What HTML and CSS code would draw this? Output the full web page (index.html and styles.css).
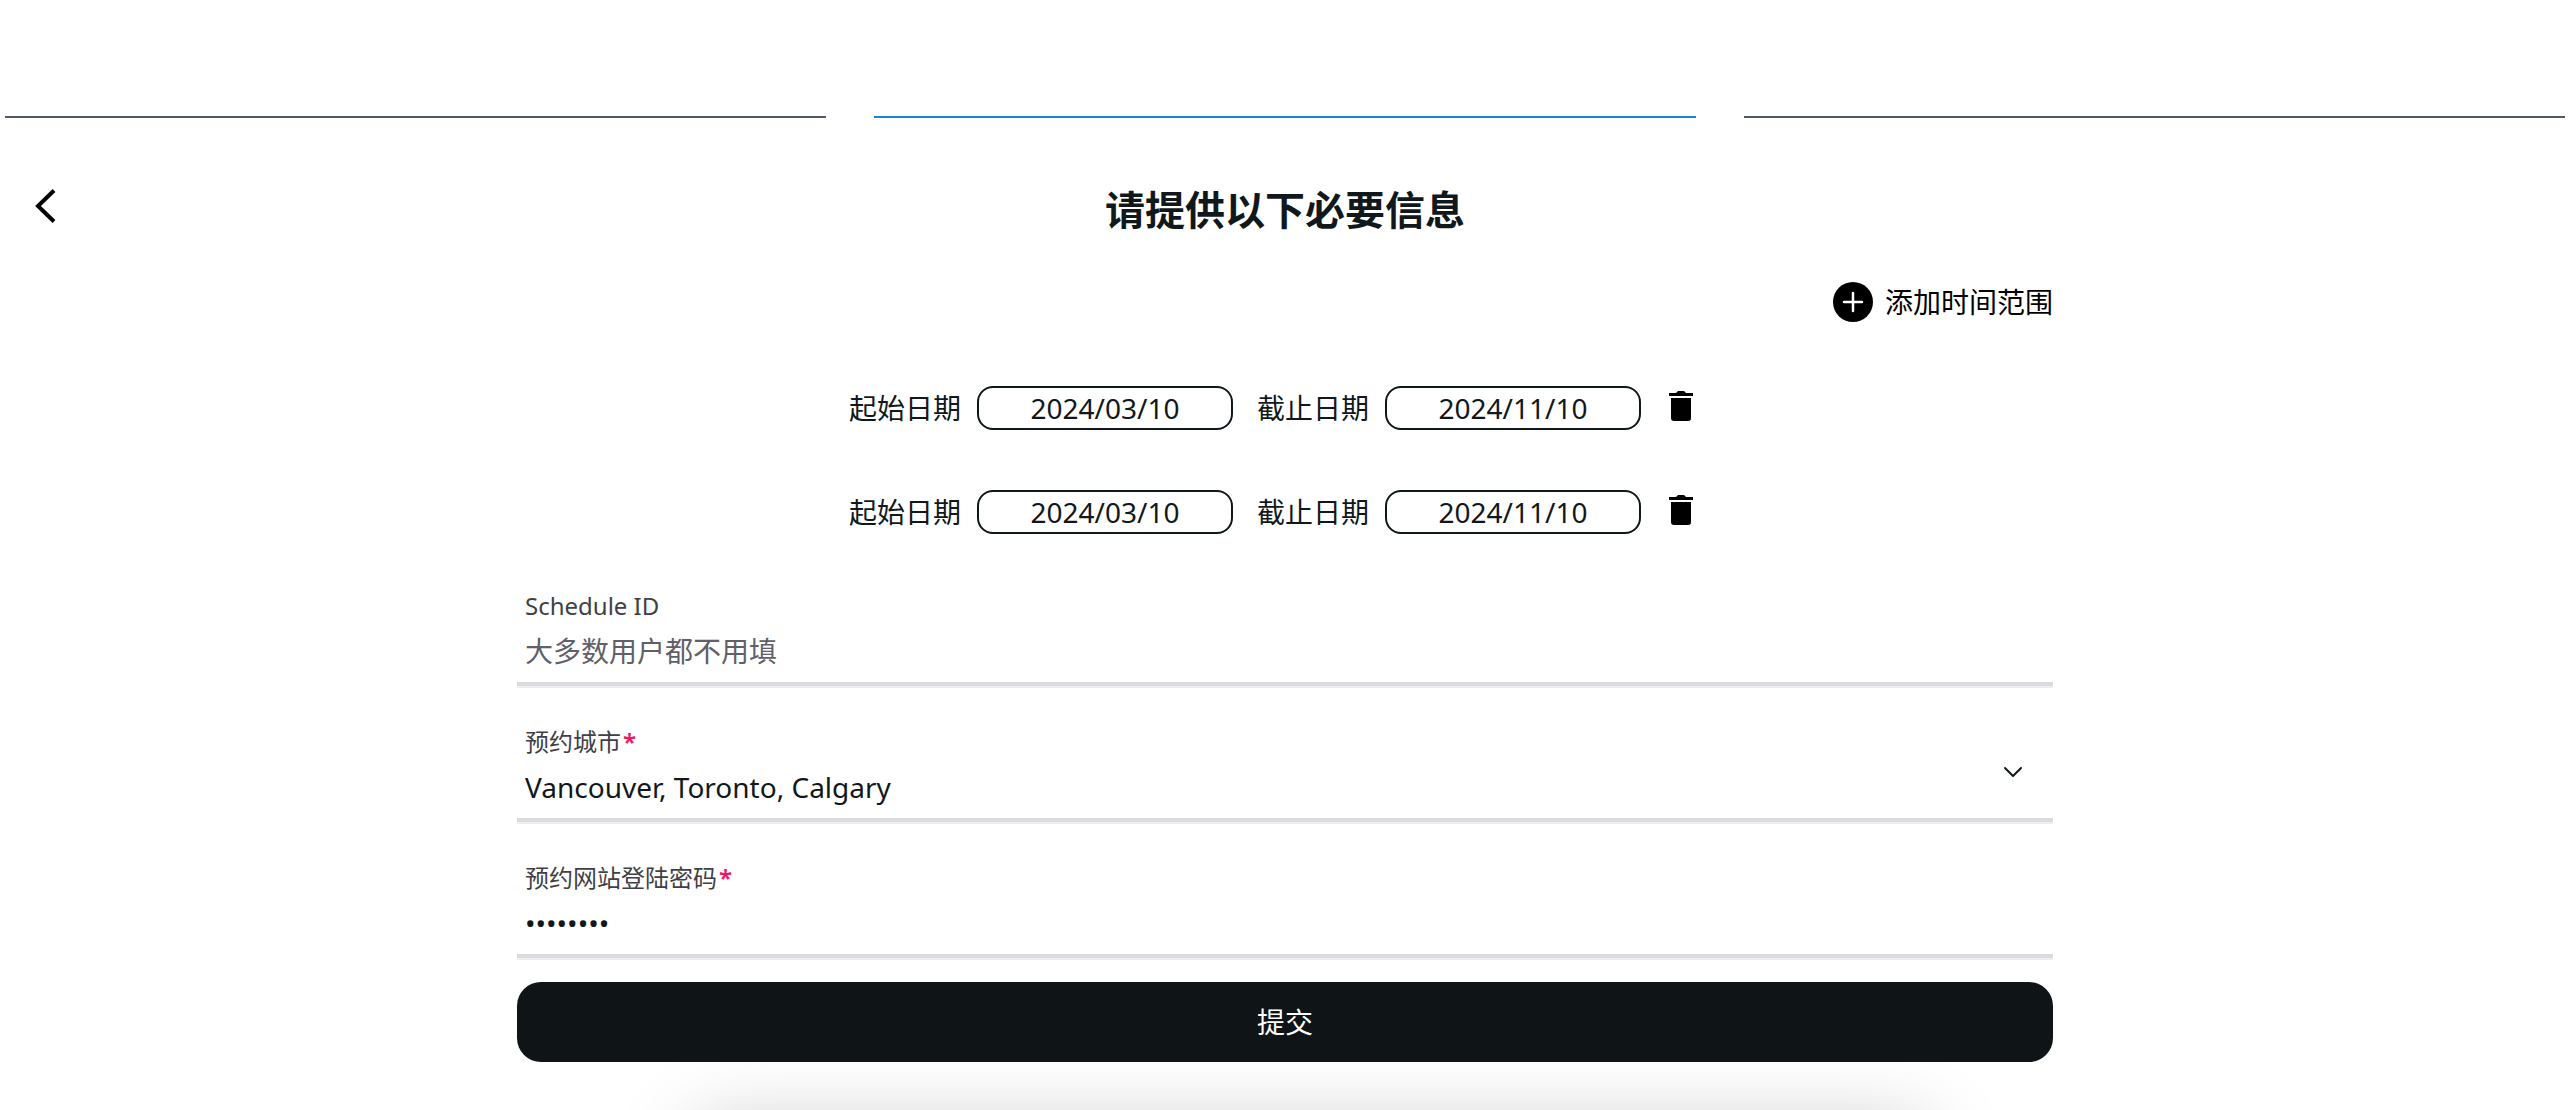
FILE: index.html
```html
<!DOCTYPE html>
<html lang="zh-CN">
<head>
<meta charset="utf-8">
<meta name="viewport" content="width=device-width, initial-scale=1">
<title>请提供以下必要信息</title>
<link rel="stylesheet" href="styles.css">
</head>
<body>
<div class="steps">
  <span class="step"></span>
  <span class="step step-active"></span>
  <span class="step"></span>
</div>
<header class="header">
  <button class="icon-button back" type="button" aria-label="返回">
    <svg width="24" height="40" viewBox="0 0 24 40" fill="none" stroke="#000" stroke-width="4"><path d="M22 4.500 6 20 22 35.500"/></svg>
  </button>
  <h1 class="title">请提供以下必要信息</h1>
</header>
<main class="content">
  <button class="icon-button add" type="button">
    <svg width="48" height="48" viewBox="0 0 48 48"><circle cx="24" cy="24" r="20"/><path d="M24 15v18M15 24h18" stroke="#fff" stroke-width="2.500" stroke-linecap="round"/></svg>
    添加时间范围
  </button>
  <form class="form">
    <div class="ranges">
      <div class="range">
        <label class="range-field">起始日期<input class="date" type="text" value="2024/03/10"></label>
        <label class="range-field">截止日期<input class="date" type="text" value="2024/11/10"></label>
        <button class="icon-button remove" type="button" aria-label="删除">
          <svg width="32" height="36" viewBox="0 0 32 36"><path d="M4 5h7l2-2h6l2 2h7v3H4zM6 10h20v20a3 3 0 0 1-3 3H9a3 3 0 0 1-3-3z"/></svg>
        </button>
      </div>
      <div class="range">
        <label class="range-field">起始日期<input class="date" type="text" value="2024/03/10"></label>
        <label class="range-field">截止日期<input class="date" type="text" value="2024/11/10"></label>
        <button class="icon-button remove" type="button" aria-label="删除">
          <svg width="32" height="36" viewBox="0 0 32 36"><path d="M4 5h7l2-2h6l2 2h7v3H4zM6 10h20v20a3 3 0 0 1-3 3H9a3 3 0 0 1-3-3z"/></svg>
        </button>
      </div>
    </div>
    <div class="fields">
      <div class="field">
        <label class="label" for="schedule">Schedule ID</label>
        <input class="control" id="schedule" type="text" placeholder="大多数用户都不用填">
      </div>
      <div class="field">
        <label class="label required" for="city">预约城市</label>
        <select class="control" id="city"><option>Vancouver, Toronto, Calgary</option></select>
        <svg class="chevron" width="32" height="32" viewBox="0 0 32 32" fill="none" stroke="#11181c" stroke-width="2" stroke-linecap="round" stroke-linejoin="round"><path d="m8 12 8 8 8-8"/></svg>
      </div>
      <div class="field">
        <label class="label required" for="password">预约网站登陆密码</label>
        <input class="control" id="password" type="password" value="password">
      </div>
    </div>
    <button class="submit" type="submit">提交</button>
  </form>
</main>
<div class="glow"></div>
</body>
</html>
```
FILE: styles.css
```css
* {
  box-sizing: border-box;
}

body {
  margin: 0;
  background: #fff;
  color: #11181c;
  font: 28px/40px "Noto Sans", "Noto Sans CJK SC", sans-serif;
}

button,
input,
select {
  font: inherit;
  color: inherit;
}

.steps {
  display: flex;
  gap: 48px;
  padding: 116px 5px 0;
}

.step {
  flex: 1;
  height: 2px;
  background: #52586a;
}

.step-active {
  background: #1488d8;
}

.icon-button {
  display: flex;
  align-items: center;
  padding: 0;
  border: 0;
  background: none;
  color: #000;
}

.header {
  display: grid;
  grid-template-columns: 1fr auto 1fr;
  align-items: start;
  padding: 64px 32px 0;
}

.back {
  width: 24px;
  height: 48px;
}

.title {
  margin: 0;
  font-size: 40px;
  line-height: 56px;
  font-weight: 700;
}

.content {
  width: calc(100% - 64px);
  max-width: 1536px;
  margin: 0 auto;
}

.add {
  gap: 8px;
  margin: 40px 0 0 auto;
}

.form {
  margin-top: 60px;
}

.ranges {
  display: grid;
  gap: 60px;
}

.range {
  display: flex;
  justify-content: center;
  gap: 24px;
}

.range-field {
  display: flex;
  align-items: center;
  gap: 16px;
}

.date {
  width: 256px;
  height: 44px;
  padding: 0;
  border: 2px solid #11181c;
  border-radius: 16px;
  background: none;
  text-align: center;
}

.remove {
  height: 40px;
  margin-right: 24px;
}

.fields {
  display: grid;
  gap: 16px;
  margin-top: 32px;
}

.field {
  position: relative;
  height: 120px;
  padding: 20px 8px 0;
  border-bottom: 4px solid #dcdbe0;
  box-shadow: 0 2px 0 #ededee;
}

.label {
  display: block;
  color: #3f3f46;
  font-size: 24px;
  line-height: 40px;
}

.required::after {
  content: "*";
  margin-left: 2px;
  color: #f31260;
  font-weight: 600;
}

.control {
  display: block;
  width: 100%;
  height: 50px;
  padding: 0;
  border: 0;
  outline: 0;
  appearance: none;
  background: none;
}

.control::placeholder {
  color: #60606a;
  opacity: 1;
}

.chevron {
  position: absolute;
  right: 24px;
  top: 54px;
  pointer-events: none;
}

.submit {
  display: block;
  width: 100%;
  height: 80px;
  margin-top: 24px;
  border: 0;
  border-radius: 24px;
  background: #0f1517;
  color: #fff;
}

.glow {
  position: relative;
  height: 48px;
  overflow: hidden;
}

.glow::after {
  content: "";
  position: absolute;
  top: 68px;
  left: 27%;
  right: 25%;
  height: 160px;
  border-radius: 24px;
  box-shadow: 0 0 80px rgba(0, 0, 0, 0.25);
}
```
